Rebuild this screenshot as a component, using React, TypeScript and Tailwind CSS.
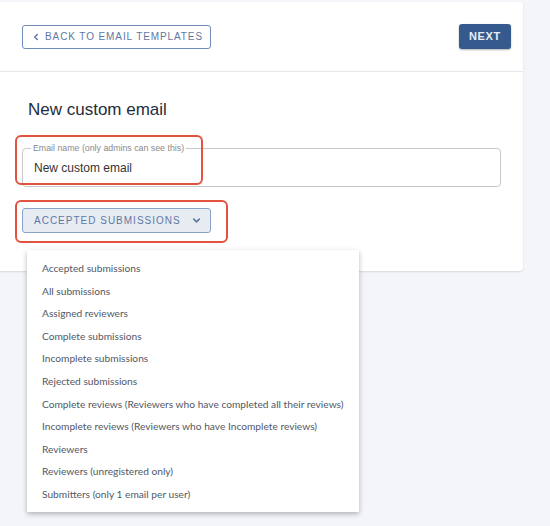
import { ChevronLeft, ChevronDown } from "lucide-react";

const options = [
  "Accepted submissions",
  "All submissions",
  "Assigned reviewers",
  "Complete submissions",
  "Incomplete submissions",
  "Rejected submissions",
  "Complete reviews (Reviewers who have completed all their reviews)",
  "Incomplete reviews (Reviewers who have Incomplete reviews)",
  "Reviewers",
  "Reviewers (unregistered only)",
  "Submitters (only 1 email per user)",
];

export default function App() {
  return (
    <div className="relative h-[526px] w-[550px] overflow-hidden bg-[#f4f5f9] pt-[2px] font-['Liberation_Sans','Arial',sans-serif]">
      {/* Card */}
      <div className="w-[523px] rounded-r-[4px] bg-white shadow-[0_1px_2px_rgba(0,0,0,0.12)]">
        <div className="flex h-[70px] items-center justify-between border-b border-[#e6e8ec] pl-[22px] pr-[12px]">
          <button className="flex h-[24px] w-[189px] items-center gap-[4px] whitespace-nowrap rounded-[3px] border border-[#6f8bb8] pl-[8px] text-[10px] tracking-[0.09em] text-[#5f78a3]">
            <ChevronLeft className="h-[10px] w-[10px] shrink-0" strokeWidth={3.5} />
            BACK TO EMAIL TEMPLATES
          </button>
          <button className="h-[25px] w-[52px] rounded-[3px] bg-[#355a8e] text-[11px] font-bold tracking-[0.06em] text-[#e9eef6] shadow-[0_1px_2px_rgba(0,0,0,0.3)]">
            NEXT
          </button>
        </div>

        <div className="px-[22px] pb-[38px] pt-[26px]">
          <h1 className="pl-[6px] text-[17px] leading-[24px] text-[#1f2d3d]">New custom email</h1>

          <fieldset className="mt-[22px] h-[43px] w-[479px] rounded-[4px] border border-[#c8c8c8] px-[8px]">
            <legend className="px-[2px] text-[8.8px] leading-[8px] text-[#8a8a8a]">
              Email name (only admins can see this)
            </legend>
            <div className="pl-[3px] pt-[7px] text-[12px] text-[#333]">New custom email</div>
          </fieldset>

          <button className="mt-[21px] flex h-[25px] w-[189px] items-center whitespace-nowrap rounded-[3px] border border-[#8aa2c8] bg-[#e7ecf3] pl-[11px] text-[10px] tracking-[0.1em] text-[#5f78a3]">
            ACCEPTED SUBMISSIONS
            <ChevronDown className="ml-[10px] h-[11px] w-[11px] shrink-0" strokeWidth={3.5} />
          </button>
        </div>
      </div>

      {/* Annotation highlights */}
      <div className="absolute left-[15px] top-[135px] h-[50px] w-[188px] rounded-[6px] border-2 border-[#e2533f]" />
      <div className="absolute left-[15px] top-[200px] h-[43px] w-[213px] rounded-[6px] border-2 border-[#e2533f]" />

      {/* Dropdown menu */}
      <div className="absolute left-[27px] top-[250px] w-[332px] bg-white pb-[6px] pt-[7px] font-['Lato','Liberation_Sans',sans-serif] shadow-[0_2px_5px_rgba(0,0,0,0.28)]">
        {options.map((o) => (
          <div key={o} className="whitespace-nowrap px-[15px] text-[10.2px] leading-[22.6px] text-[#525865]">
            {o}
          </div>
        ))}
      </div>
    </div>
  );
}
